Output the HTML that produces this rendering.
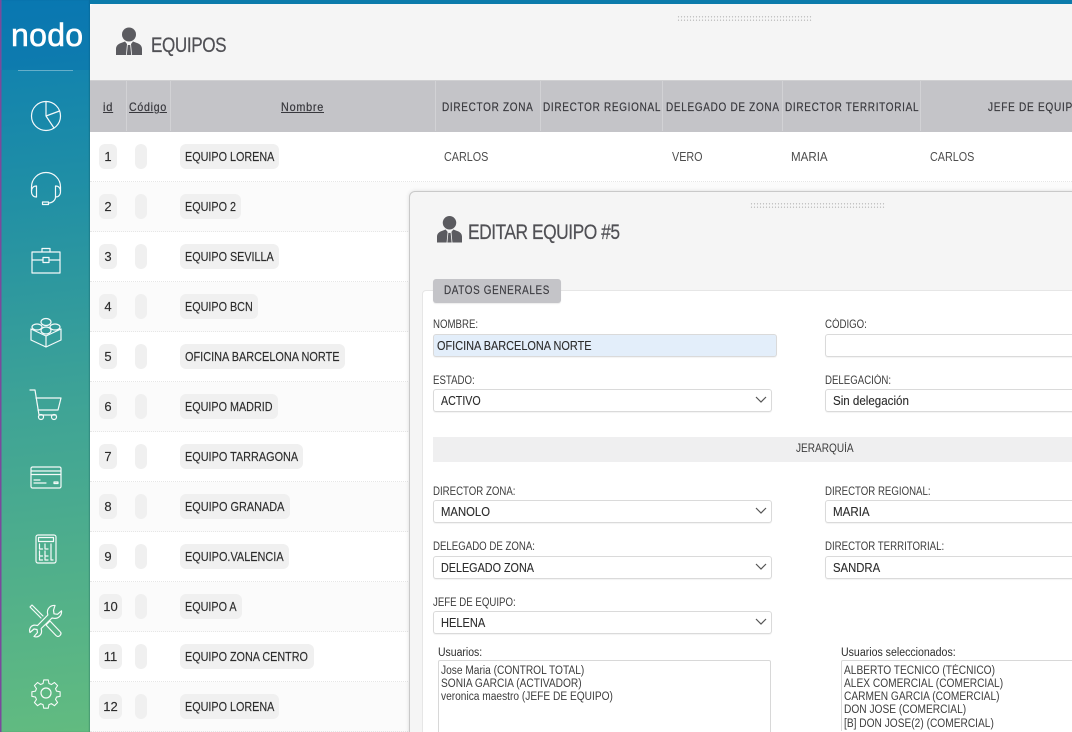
<!DOCTYPE html>
<html lang="es"><head><meta charset="utf-8"><title>Equipos</title>
<style>
html,body{margin:0;padding:0;width:1072px;height:732px;overflow:hidden}
body{font-family:"Liberation Sans",sans-serif;color:#444;background:#fff}
#page{position:relative;width:1072px;height:732px;overflow:hidden;background:#fff;filter:blur(.3px)}
.a,.t,.b,.h,.l,.f{position:absolute}
.t{white-space:nowrap}
.x{display:inline-block;transform-origin:0 50%;transform:scaleX(var(--s,.83));white-space:nowrap}
#side{position:absolute;left:0;top:0;width:90px;height:732px;background:linear-gradient(174deg,#0b7db3 0%,#1f8ea6 25%,#3ea396 55%,#62bb80 100%);box-shadow:inset 1.5px 0 0 #7a4a9c,inset -1px 0 1px rgba(0,60,70,.25)}
#side svg{position:absolute;fill:none;stroke:#fff;stroke-width:1.2;stroke-linejoin:round;stroke-linecap:round;opacity:.95}
.h{font-size:12px;letter-spacing:.85px;color:#38383d;top:100px;line-height:14px;white-space:nowrap;-webkit-text-stroke:.2px #38383d}
.sep{position:absolute;top:81px;height:50px;width:1px;background:#d2d2d5}
.row{position:absolute;left:90px;width:982px;height:50px;border-bottom:1px dotted #e6e6e6;box-sizing:border-box}
.b{background:#f0f0f0;border-radius:6px;height:25px;line-height:25px;font-size:13px;color:#2c2c2c;white-space:nowrap;box-sizing:border-box;-webkit-text-stroke:.15px #2c2c2c}
.n{padding-left:5px}
.c{text-align:center}
.l{font-size:11.5px;color:#3c3c3c;white-space:nowrap;line-height:13px}
.l .x{--s:.84}
.f{height:23px;line-height:22px;box-sizing:border-box;border:1px solid #dadada;border-radius:3px;background:#fff;font-size:13px;color:#2c2c2c;padding-left:7px;white-space:nowrap;box-shadow:0 1px 1px rgba(0,0,0,.05);-webkit-text-stroke:.12px #2c2c2c}
.f svg{position:absolute;right:3px;top:5px}
.v{font-size:13px;line-height:14px;color:#4d4d4d;top:149.500px}
.li{font-size:11.5px;line-height:13.3px;color:#3c3c3c;white-space:nowrap;transform-origin:0 0;transform:scaleX(.885)}
</style></head><body><div id="page">

<div id="side">
<div class="a" style="left:1.5px;top:0;width:88px;height:70px;background:rgba(5,110,175,.35)"></div>
<div class="t" style="left:11px;top:16px;font-size:32px;line-height:38px;color:#fff;letter-spacing:.3px;-webkit-text-stroke:.6px #fff">nodo</div>
<div class="a" style="left:18px;top:70px;width:55px;height:1px;background:rgba(255,255,255,.35)"></div>

<svg style="left:30px;top:100px" width="32" height="32" viewBox="0 0 32 32"><circle cx="16" cy="16" r="14.500"/><path d="M16 16V1.500M16 16L29.500 11M16 16l8 12"/></svg>

<svg style="left:30px;top:171px" width="32" height="36" viewBox="0 0 32 36"><path d="M1.500 20V16a14.500 14.500 0 0 1 29 0v4"/><path d="M6.500 15v11c-3 0-5-2-5-5.500s2-5.500 5-5.500zM25.500 15v11c3 0 5-2 5-5.500s-2-5.500-5-5.500z"/><path d="M25.500 26c0 3-3 6-7 6"/><rect x="12.500" y="31" width="6" height="2.500"/></svg>

<svg style="left:31px;top:247px" width="30" height="27" viewBox="0 0 30 27"><rect x="1" y="5" width="28" height="21"/><path d="M1 13h11M18 13h11M11 5V1.500h8V5"/><rect x="12" y="10.500" width="6" height="5"/></svg>

<svg style="left:29px;top:317px" width="34" height="31" viewBox="0 0 34 31"><path d="M2 12v11l15 7 15-7V12M2 12l15 7 15-7M17 19v11"/><ellipse cx="8" cy="10" rx="5" ry="3"/><ellipse cx="26" cy="10" rx="5" ry="3"/><ellipse cx="17" cy="5" rx="5" ry="3.500"/><ellipse cx="17" cy="13.500" rx="5" ry="3.500"/></svg>

<svg style="left:29px;top:388px" width="34" height="34" viewBox="0 0 34 34"><path d="M1 2h5l4 25h17"/><path d="M7 10h25l-3 12H9"/><circle cx="12" cy="29" r="2.500"/><circle cx="25" cy="29" r="2.500"/></svg>

<svg style="left:30px;top:466px" width="32" height="24" viewBox="0 0 32 24"><rect x="1" y="1" width="30" height="21" rx="1.500"/><path d="M1 5h30M1 8.500h30M4 14h6M4 17h12"/><rect x="24" y="16" width="4" height="1.500"/></svg>

<svg style="left:35px;top:534px" width="22" height="30" viewBox="0 0 22 30"><rect x="1" y="1" width="20" height="28" rx="2"/><rect x="3.500" y="3.500" width="15" height="4"/><path d="M4.500 10v5h3M4.500 17v5h3M4.500 23v3h3M10 10v5h3M10 17v5h3M10 23v3h3M16 10v16h2"/></svg>

<svg style="left:29px;top:604px" width="34" height="34" viewBox="0 0 34 34"><path d="M3 1L1 3l11 11M3 1l11 11"/><path d="M21 17l-4 4 10 10.500c1.500 1.500 3 1 4 0s1.500-2.500 0-4z"/><path d="M26 1.500c-4.500-.5-8 3-7.500 7.500l.3 2L8.500 21.500l-2-.3C2.500 20.700-.5 24.500 1 28.500l4-3.500 3 .5.500 3-3.500 4c4 1.500 8-1.500 7.500-6l-.3-2L23 14l2 .3c4.500.5 8-3 7.500-7.500l-4 3.500-3.500-.5-.5-3.500z"/></svg>

<svg style="left:30px;top:677px" width="32" height="32" viewBox="0 0 32 32"><circle cx="16" cy="16" r="5"/><path d="M13.500 1.500h5l.8 4 2.700 1.100 3.400-2.300 3.500 3.500-2.300 3.400 1.100 2.700 4 .8v5l-4 .8-1.100 2.700 2.300 3.400-3.500 3.500-3.400-2.300-2.700 1.100-.8 4h-5l-.8-4-2.700-1.100-3.400 2.300-3.500-3.500 2.300-3.400-1.100-2.700-4-.8v-5l4-.8 1.100-2.700-2.300-3.400 3.500-3.500 3.400 2.300 2.700-1.100z" transform="translate(1.600 1.600) scale(.9)"/></svg>
</div>

<!-- main -->
<div class="a" style="left:90px;top:0;width:982px;height:4px;background:#0b7bab"></div>
<div class="a" style="left:90px;top:4px;width:982px;height:76px;background:#f5f5f5;border-radius:4px 0 0 0"></div>
<div class="a" style="left:677px;top:15px;width:135px;height:7px;background-image:radial-gradient(#c4c4c4 .6px,transparent .8px);background-size:3px 3.500px"></div>

<svg class="a" style="left:116px;top:27px" width="26" height="29" viewBox="0 0 26 29"><circle cx="13" cy="7.500" r="7" fill="#5b5b60"/><path d="M0 28v-6c0-3 2-5 5-6l4-1.500 2 2.500-1 11zM26 28v-6c0-3-2-5-5-6l-4-1.500-2 2.500 1 11zM11.800 18h2.400l1 10h-4.400z" fill="#5b5b60"/></svg>
<div class="t" style="left:151px;top:33.500px;font-size:21px;line-height:24px;color:#505055;letter-spacing:-.5px;-webkit-text-stroke:.2px #505055"><span class="x" style="--s:.815">EQUIPOS</span></div>

<!-- table header -->
<div class="a" style="left:90px;top:80px;width:982px;height:52px;background:#c4c4c8;border-top:1px solid #d0d0d2;box-sizing:border-box"></div>
<div class="sep" style="left:126px"></div><div class="sep" style="left:170px"></div><div class="sep" style="left:435px"></div><div class="sep" style="left:540px"></div><div class="sep" style="left:662px"></div><div class="sep" style="left:782px"></div><div class="sep" style="left:920px"></div>
<div class="h" style="left:103px"><span class="x" style="--s:.92;text-decoration:underline">id</span></div>
<div class="h" style="left:129px"><span class="x" style="--s:.88;text-decoration:underline">Código</span></div>
<div class="h" style="left:281px"><span class="x" style="--s:.9;text-decoration:underline">Nombre</span></div>
<div class="h" style="left:442px"><span class="x">DIRECTOR ZONA</span></div>
<div class="h" style="left:543px"><span class="x" style="--s:.83">DIRECTOR REGIONAL</span></div>
<div class="h" style="left:666px"><span class="x">DELEGADO DE ZONA</span></div>
<div class="h" style="left:785px"><span class="x">DIRECTOR TERRITORIAL</span></div>
<div class="h" style="left:988px"><span class="x" style="--s:.84">JEFE DE EQUIPO</span></div>

<!-- rows -->
<div class="row" style="top:132px;background:#fff"></div>
<div class="row" style="top:182px;background:#fbfbfb"></div>
<div class="row" style="top:232px;background:#fff"></div>
<div class="row" style="top:282px;background:#fbfbfb"></div>
<div class="row" style="top:332px;background:#fff"></div>
<div class="row" style="top:382px;background:#fbfbfb"></div>
<div class="row" style="top:432px;background:#fff"></div>
<div class="row" style="top:482px;background:#fbfbfb"></div>
<div class="row" style="top:532px;background:#fff"></div>
<div class="row" style="top:582px;background:#fbfbfb"></div>
<div class="row" style="top:632px;background:#fff"></div>
<div class="row" style="top:682px;background:#fbfbfb"></div>

<div class="b c" style="left:99px;top:144px;width:18px">1</div><div class="b" style="left:135px;top:144px;width:12px"></div><div class="b n" style="left:180px;top:144px;width:99px"><span class="x">EQUIPO LORENA</span></div>
<div class="b c" style="left:99px;top:194px;width:18px">2</div><div class="b" style="left:135px;top:194px;width:12px"></div><div class="b n" style="left:180px;top:194px;width:61px"><span class="x">EQUIPO 2</span></div>
<div class="b c" style="left:99px;top:244px;width:18px">3</div><div class="b" style="left:135px;top:244px;width:12px"></div><div class="b n" style="left:180px;top:244px;width:99px"><span class="x">EQUIPO SEVILLA</span></div>
<div class="b c" style="left:99px;top:294px;width:18px">4</div><div class="b" style="left:135px;top:294px;width:12px"></div><div class="b n" style="left:180px;top:294px;width:78px"><span class="x">EQUIPO BCN</span></div>
<div class="b c" style="left:99px;top:344px;width:18px">5</div><div class="b" style="left:135px;top:344px;width:12px"></div><div class="b n" style="left:180px;top:344px;width:165px"><span class="x" style="--s:.84">OFICINA BARCELONA NORTE</span></div>
<div class="b c" style="left:99px;top:394px;width:18px">6</div><div class="b" style="left:135px;top:394px;width:12px"></div><div class="b n" style="left:180px;top:394px;width:98px"><span class="x">EQUIPO MADRID</span></div>
<div class="b c" style="left:99px;top:444px;width:18px">7</div><div class="b" style="left:135px;top:444px;width:12px"></div><div class="b n" style="left:180px;top:444px;width:123px"><span class="x" style="--s:.836">EQUIPO TARRAGONA</span></div>
<div class="b c" style="left:99px;top:494px;width:18px">8</div><div class="b" style="left:135px;top:494px;width:12px"></div><div class="b n" style="left:180px;top:494px;width:110px"><span class="x" style="--s:.839">EQUIPO GRANADA</span></div>
<div class="b c" style="left:99px;top:544px;width:18px">9</div><div class="b" style="left:135px;top:544px;width:12px"></div><div class="b n" style="left:180px;top:544px;width:109px"><span class="x" style="--s:.839">EQUIPO.VALENCIA</span></div>
<div class="b c" style="left:99px;top:594px;width:23px">10</div><div class="b" style="left:135px;top:594px;width:12px"></div><div class="b n" style="left:180px;top:594px;width:62px"><span class="x">EQUIPO A</span></div>
<div class="b c" style="left:99px;top:644px;width:23px">11</div><div class="b" style="left:135px;top:644px;width:12px"></div><div class="b n" style="left:180px;top:644px;width:134px"><span class="x">EQUIPO ZONA CENTRO</span></div>
<div class="b c" style="left:99px;top:694px;width:23px">12</div><div class="b" style="left:135px;top:694px;width:12px"></div><div class="b n" style="left:180px;top:694px;width:99px"><span class="x">EQUIPO LORENA</span></div>

<div class="t v" style="left:444px"><span class="x">CARLOS</span></div>
<div class="t v" style="left:672px"><span class="x">VERO</span></div>
<div class="t v" style="left:791px"><span class="x" style="--s:.89">MARIA</span></div>
<div class="t v" style="left:930px"><span class="x">CARLOS</span></div>

<!-- modal -->
<div class="a" style="left:409px;top:191px;width:680px;height:560px;background:#f5f5f5;border:1px solid #c9c9c9;border-radius:6px;box-sizing:border-box;box-shadow:0 0 4px rgba(0,0,0,.12)"></div>
<div class="a" style="left:750px;top:202px;width:135px;height:7px;background-image:radial-gradient(#c4c4c4 .6px,transparent .8px);background-size:3px 3.500px"></div>
<svg class="a" style="left:437px;top:215px" width="25" height="29" viewBox="0 0 26 29"><circle cx="13" cy="7.500" r="7" fill="#5b5b60"/><path d="M0 28v-6c0-3 2-5 5-6l4-1.500 2 2.500-1 11zM26 28v-6c0-3-2-5-5-6l-4-1.500-2 2.500 1 11zM11.800 18h2.400l1 10h-4.400z" fill="#5b5b60"/></svg>
<div class="t" style="left:468px;top:220.500px;font-size:21px;line-height:24px;color:#505055;letter-spacing:-.6px;-webkit-text-stroke:.2px #505055"><span class="x" style="--s:.83">EDITAR EQUIPO #5</span></div>

<div class="a" style="left:422px;top:290px;width:660px;height:470px;background:#fff;border:1px solid #e6e6e6;border-radius:4px;box-sizing:border-box"></div>
<div class="a" style="left:433px;top:279px;width:128px;height:24px;background:#c4c4c8;border-radius:3px;box-shadow:0 1px 1px rgba(0,0,0,.08)"></div>
<div class="t" style="left:444px;top:279px;font-size:11.500px;line-height:24px;letter-spacing:.75px;color:#3a3a3f;-webkit-text-stroke:.15px #3a3a3f"><span class="x" style="--s:.86">DATOS GENERALES</span></div>

<div class="l" style="left:433px;top:319px"><span class="x">NOMBRE:</span></div>
<div class="f" style="left:433px;top:334px;width:344px;background:#e3eefa;padding-left:3px"><span class="x" style="--s:.84">OFICINA BARCELONA NORTE</span></div>
<div class="l" style="left:825px;top:319px"><span class="x">CÓDIGO:</span></div>
<div class="f" style="left:825px;top:334px;width:260px"></div>

<div class="l" style="left:433px;top:375px"><span class="x">ESTADO:</span></div>
<div class="f" style="left:433px;top:389px;width:339px"><span class="x" style="--s:.82">ACTIVO</span><svg width="14" height="10" viewBox="0 0 14 10"><path d="M2 2l5 5 5-5" fill="none" stroke="#555" stroke-width="1.200"/></svg></div>
<div class="l" style="left:825px;top:375px"><span class="x">DELEGACIÓN:</span></div>
<div class="f" style="left:825px;top:389px;width:260px"><span class="x" style="--s:.89">Sin delegación</span></div>

<div class="a" style="left:433px;top:437px;width:640px;height:25px;background:#efeff0"></div>
<div class="t" style="left:796px;top:443px;font-size:11.500px;line-height:13px;color:#3c3c3c"><span class="x" style="--s:.875">JERARQUÍA</span></div>

<div class="l" style="left:433px;top:486px"><span class="x">DIRECTOR ZONA:</span></div>
<div class="f" style="left:433px;top:500px;width:339px"><span class="x" style="--s:.87">MANOLO</span><svg width="14" height="10" viewBox="0 0 14 10"><path d="M2 2l5 5 5-5" fill="none" stroke="#555" stroke-width="1.200"/></svg></div>
<div class="l" style="left:825px;top:486px"><span class="x">DIRECTOR REGIONAL:</span></div>
<div class="f" style="left:825px;top:500px;width:260px"><span class="x" style="--s:.89">MARIA</span></div>

<div class="l" style="left:433px;top:541px"><span class="x">DELEGADO DE ZONA:</span></div>
<div class="f" style="left:433px;top:556px;width:339px"><span class="x">DELEGADO ZONA</span><svg width="14" height="10" viewBox="0 0 14 10"><path d="M2 2l5 5 5-5" fill="none" stroke="#555" stroke-width="1.200"/></svg></div>
<div class="l" style="left:825px;top:541px"><span class="x">DIRECTOR TERRITORIAL:</span></div>
<div class="f" style="left:825px;top:556px;width:260px"><span class="x" style="--s:.87">SANDRA</span></div>

<div class="l" style="left:433px;top:597px"><span class="x">JEFE DE EQUIPO:</span></div>
<div class="f" style="left:433px;top:611px;width:339px"><span class="x" style="--s:.85">HELENA</span><svg width="14" height="10" viewBox="0 0 14 10"><path d="M2 2l5 5 5-5" fill="none" stroke="#555" stroke-width="1.200"/></svg></div>

<div class="l" style="left:438px;top:647px;color:#2c2c2c"><span class="x" style="--s:.91">Usuarios:</span></div>
<div class="a" style="left:438px;top:660px;width:333px;height:90px;border:1px solid #d8d8d8;border-radius:2px;box-sizing:border-box;background:#fff"></div>
<div class="a li" style="left:441px;top:664.500px">Jose Maria (CONTROL TOTAL)<br>SONIA GARCIA (ACTIVADOR)<br>veronica maestro (JEFE DE EQUIPO)</div>

<div class="l" style="left:841px;top:647px;color:#2c2c2c"><span class="x" style="--s:.92">Usuarios seleccionados:</span></div>
<div class="a" style="left:841px;top:660px;width:240px;height:71px;overflow:hidden;border:1px solid #d8d8d8;border-bottom:0;border-radius:2px 0 0 0;box-sizing:border-box;background:#fff">
<div class="a li" style="left:2px;top:3.500px">ALBERTO TECNICO (TÉCNICO)<br>ALEX COMERCIAL (COMERCIAL)<br>CARMEN GARCIA (COMERCIAL)<br>DON JOSE (COMERCIAL)<br>[B] DON JOSE(2) (COMERCIAL)</div>
</div>
</div></body></html>
